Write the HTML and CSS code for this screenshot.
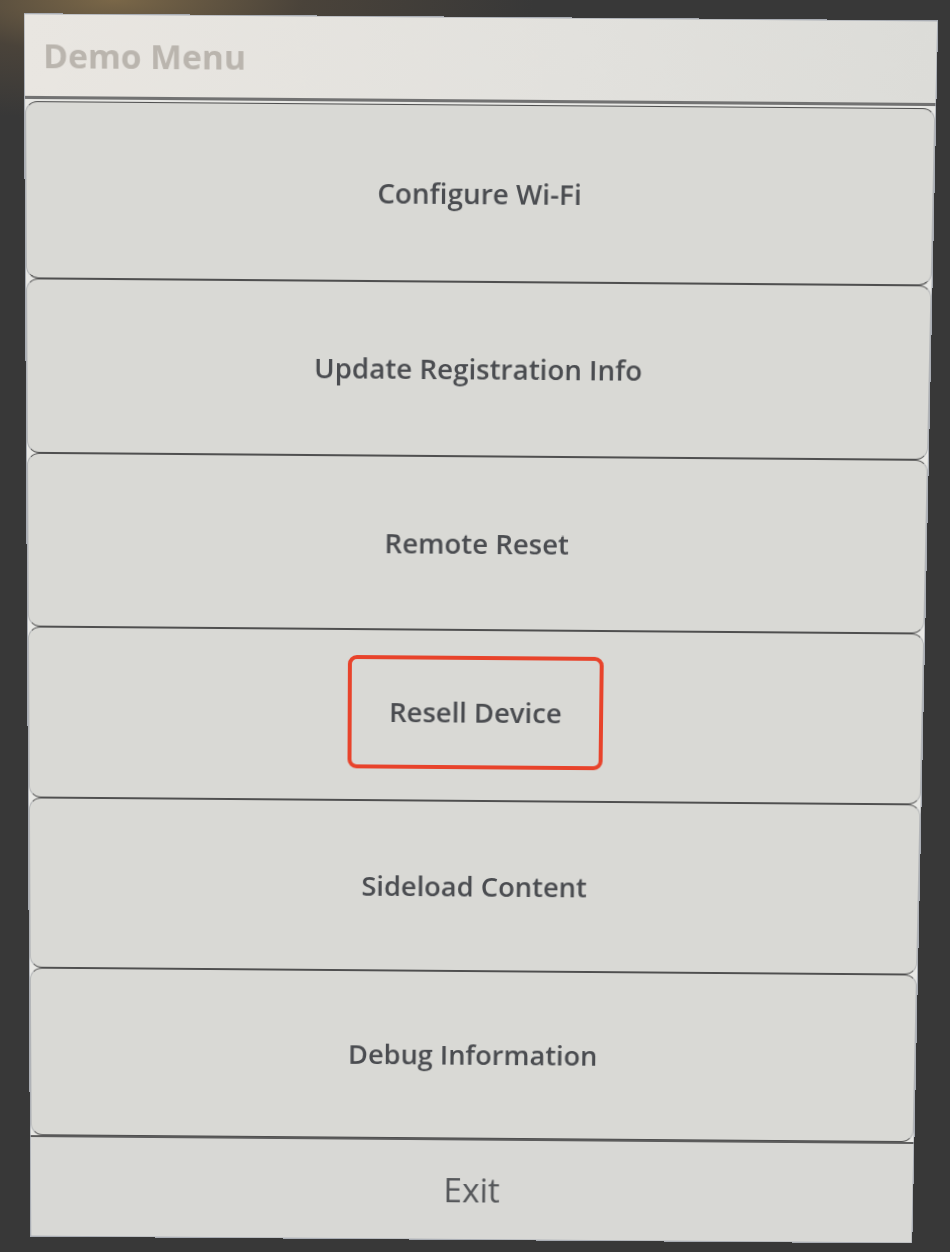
FILE: index.html
```html
<!DOCTYPE html>
<html lang="en">
<head>
<meta charset="utf-8">
<title>Demo Menu</title>
<link rel="stylesheet" href="styles.css">
</head>
<body>
  <div class="screen">
    <div class="header"><span class="title">Demo Menu</span></div>
    <div class="menu">
      <div class="item"><span class="label">Configure Wi-Fi</span></div>
      <div class="item"><span class="label">Update Registration Info</span></div>
      <div class="item"><span class="label">Remote Reset</span></div>
      <div class="item"><span class="label highlight">Resell Device</span></div>
      <div class="item"><span class="label">Sideload Content</span></div>
      <div class="item"><span class="label">Debug Information</span></div>
    </div>
    <div class="footer"><span class="exit">Exit</span></div>
  </div>
</body>
</html>
```

FILE: styles.css
```css
html, body {
  margin: 0;
  height: 100%;
}

body {
  width: 950px;
  height: 1252px;
  box-sizing: border-box;
  padding: 27px 0 0 27px;
  overflow: hidden;
  background:
    radial-gradient(ellipse 420px 120px at 12% 0%, #7a6748 0%, #4a433a 45%, rgba(58,57,56,0) 100%),
    #383838;
}

.screen {
  width: 898px;
  height: 1225px;
  display: flex;
  flex-direction: column;
  background: #e8e8e5;
  border: 1px solid #a9adb4;
  box-sizing: border-box;
  overflow: hidden;
  transform-origin: 50% 50%;
  transform: perspective(2000px) rotate(0.45deg) rotateX(-3.4deg);
}

.header {
  height: 79px;
  flex: none;
  display: flex;
  align-items: center;
  padding-left: 18px;
  background: linear-gradient(90deg, #e9e6e1 0%, #e2e1dd 60%, #dcdcd8 100%);
  border-bottom: 3px solid #727272;
}

.title {
  font-family: "Open Sans", "Noto Sans", sans-serif;
  font-weight: 700;
  font-size: 33px;
  color: #bab5ae;
}

.menu {
  flex: 1;
  display: flex;
  flex-direction: column;
  padding-top: 2px;
}

.item {
  flex: 1;
  display: flex;
  align-items: center;
  justify-content: center;
  background: #d9d9d5;
  border: 1px solid #b4b6b8;
  border-top-color: #4f4f4f;
  border-bottom-color: #4f4f4f;
  border-radius: 12px;
}

.label {
  font-family: "Open Sans", "Noto Sans", sans-serif;
  font-weight: 600;
  font-size: 27.5px;
  color: #4a4c50;
}

.highlight {
  display: inline-flex;
  align-items: center;
  justify-content: center;
  width: 256px;
  height: 114px;
  box-sizing: border-box;
  border: 4px solid #e8432b;
  border-radius: 9px;
  margin-top: -6px;
}

.footer {
  height: 102px;
  flex: none;
  display: flex;
  align-items: center;
  justify-content: center;
  background: #d8d8d5;
  border-top: 2px solid #5c5c5c;
}

.exit {
  font-family: "Open Sans", "Noto Sans", sans-serif;
  font-weight: 400;
  font-size: 34px;
  color: #55575a;
}
```
